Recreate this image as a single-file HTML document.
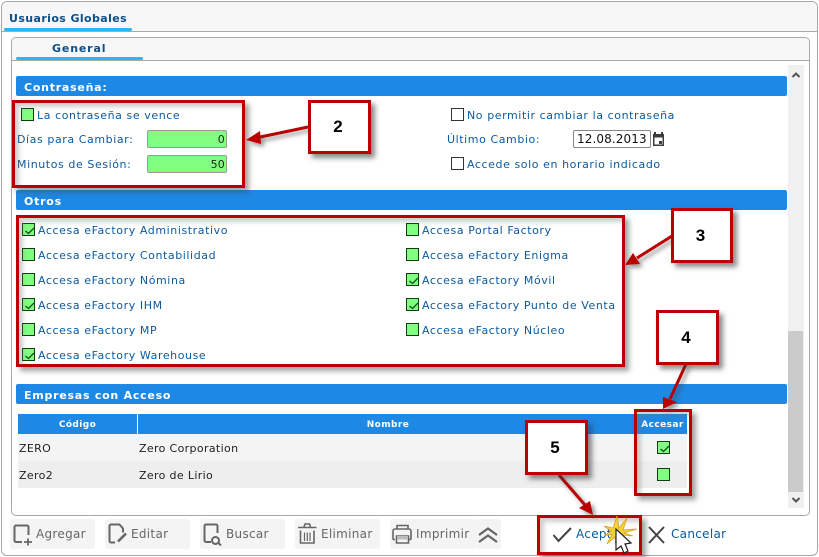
<!DOCTYPE html>
<html><head><meta charset="utf-8"><style>
html,body{margin:0;padding:0;background:#fff}
#r{position:relative;width:819px;height:557px;overflow:hidden;background:#fff;font-family:"DejaVu Sans","Liberation Sans",sans-serif;font-size:11px;letter-spacing:.58px;color:#0b5a9e}
#r div,#r span{position:absolute;box-sizing:border-box}
.t{white-space:nowrap;line-height:14px;margin-top:1px}
.bar{left:16px;width:771px;height:20px;background:#1e88e5;border-radius:2px;color:#fff;font-weight:bold}
.bar b{position:absolute;left:8px;top:5px;line-height:14px;white-space:nowrap;letter-spacing:.75px}
.g{width:13px;height:13px;background:#80ff80;border:1px solid #0f3d0f}
.w{width:13px;height:13px;background:#fff;border:1px solid #333}
.g svg{position:absolute;left:1px;top:1px}
.inp{width:80px;height:18px;background:#80ff80;border:1px solid #999;border-radius:2px;color:#222;font-size:11px;text-align:right;padding-right:1px;line-height:17px;letter-spacing:.2px}
.rb{border:3px solid #bb0000;box-shadow:4px 4px 5px rgba(70,70,70,.5), inset 4px 4px 4px rgba(120,120,120,.35)}
.nb{background:#fff;border:3px solid #bb0000;box-shadow:4px 4px 5px rgba(60,60,60,.6);font:bold 17px "Liberation Sans",sans-serif;color:#000;text-align:center;letter-spacing:0;padding-right:3px}
.btn{top:519px;height:30px;width:85px;background:#f4f4f4;border-radius:3px}
.bt{top:527px;color:#666;font-size:12px;letter-spacing:.3px;white-space:nowrap;line-height:15px}
.h{background:#1e88e5;color:#fff;font-weight:bold;font-size:9px;text-align:center;height:20px;top:414px;line-height:22px;letter-spacing:.4px}
.c{color:#222;letter-spacing:.35px;white-space:nowrap;line-height:14px;margin-top:1px}
</style></head><body><div id="r">

<!-- outer panel -->
<div style="left:1px;top:1px;width:817px;height:555px;border:1px solid #a8a8a8;border-radius:6px;background:#fff"></div>
<div style="left:2px;top:2px;width:815px;height:30px;background:#f7f7f7;border-bottom:1px solid #a8a8a8;border-radius:5px 5px 0 0"></div>
<div style="left:4px;top:28px;width:128px;height:3px;background:#29b6f6;border-radius:2px"></div>
<span class="t" style="left:9px;top:11px;font-weight:bold;font-size:11px;letter-spacing:.4px;color:#0b4f8a">Usuarios Globales</span>

<!-- inner panel -->
<div style="left:11px;top:37px;width:799px;height:479px;border:1px solid #a8a8a8;border-radius:5px;background:#fff"></div>
<div style="left:12px;top:38px;width:797px;height:23px;background:#f7f7f7;border-bottom:1px solid #a8a8a8;border-radius:4px 4px 0 0"></div>
<div style="left:16px;top:57px;width:127px;height:3px;background:#29b6f6;border-radius:2px"></div>
<span class="t" style="left:52px;top:41px;font-weight:bold;letter-spacing:.85px;color:#0b4f8a">General</span>

<!-- scrollbar -->
<div style="left:788px;top:65px;width:16px;height:443px;background:#f0f0f0"></div>
<div style="left:788px;top:331px;width:15px;height:161px;background:#cbcbcb"></div>
<svg style="position:absolute;left:788px;top:65px" width="16" height="443"><path d="M4.500 12 L8 8.500 L11.500 12" fill="none" stroke="#555" stroke-width="2"/><path d="M4.500 433 L8 436.500 L11.500 433" fill="none" stroke="#555" stroke-width="2"/></svg>

<!-- Contraseña -->
<div class="bar" style="top:76px"><b>Contraseña:</b></div>
<div class="g" style="left:21px;top:108px"></div>
<span class="t" style="left:37px;top:108px">La contraseña se vence</span>
<span class="t" style="left:17px;top:132px">Días para Cambiar:</span>
<div class="inp" style="left:147px;top:130px">0</div>
<span class="t" style="left:17px;top:157px">Minutos de Sesión:</span>
<div class="inp" style="left:147px;top:155px">50</div>

<div class="w" style="left:451px;top:108px"></div>
<span class="t" style="left:467px;top:108px">No permitir cambiar la contraseña</span>
<span class="t" style="left:447px;top:132px">Último Cambio:</span>
<div style="left:573px;top:130px;width:78px;height:18px;border:1px solid #888;border-radius:2px;color:#111;font-size:12px;line-height:16px;padding-left:3px;letter-spacing:.1px;white-space:nowrap">12.08.2013</div>
<svg style="position:absolute;left:652px;top:131px" width="14" height="16"><path d="M1 3h11v12H1z" fill="#3d3d3d"/><path d="M3 1v3M10 1v3" stroke="#3d3d3d" stroke-width="2"/><path d="M2.500 6.500h8v7h-8z" fill="#fff"/><path d="M7 10h3v3H7z" fill="#3d3d3d"/></svg>
<div class="w" style="left:451px;top:157px"></div>
<span class="t" style="left:467px;top:157px">Accede solo en horario indicado</span>

<!-- Otros -->
<div class="bar" style="top:190px"><b>Otros</b></div>

<div class="g" style="left:22px;top:223px"><svg width="11" height="11"><path d="M1.500 6 L4.500 8.500 L10 3" fill="none" stroke="#0f4f1a" stroke-width="1.300"/></svg></div>
<span class="t" style="left:38px;top:223px">Accesa eFactory Administrativo</span>
<div class="g" style="left:22px;top:248px"></div>
<span class="t" style="left:38px;top:248px">Accesa eFactory Contabilidad</span>
<div class="g" style="left:22px;top:273px"></div>
<span class="t" style="left:38px;top:273px">Accesa eFactory Nómina</span>
<div class="g" style="left:22px;top:298px"><svg width="11" height="11"><path d="M1.500 6 L4.500 8.500 L10 3" fill="none" stroke="#0f4f1a" stroke-width="1.300"/></svg></div>
<span class="t" style="left:38px;top:298px">Accesa eFactory IHM</span>
<div class="g" style="left:22px;top:323px"></div>
<span class="t" style="left:38px;top:323px">Accesa eFactory MP</span>
<div class="g" style="left:22px;top:348px"><svg width="11" height="11"><path d="M1.500 6 L4.500 8.500 L10 3" fill="none" stroke="#0f4f1a" stroke-width="1.300"/></svg></div>
<span class="t" style="left:38px;top:348px">Accesa eFactory Warehouse</span>

<div class="g" style="left:406px;top:223px"></div>
<span class="t" style="left:422px;top:223px">Accesa Portal Factory</span>
<div class="g" style="left:406px;top:248px"></div>
<span class="t" style="left:422px;top:248px">Accesa eFactory Enigma</span>
<div class="g" style="left:406px;top:273px"><svg width="11" height="11"><path d="M1.500 6 L4.500 8.500 L10 3" fill="none" stroke="#0f4f1a" stroke-width="1.300"/></svg></div>
<span class="t" style="left:422px;top:273px">Accesa eFactory Móvil</span>
<div class="g" style="left:406px;top:298px"><svg width="11" height="11"><path d="M1.500 6 L4.500 8.500 L10 3" fill="none" stroke="#0f4f1a" stroke-width="1.300"/></svg></div>
<span class="t" style="left:422px;top:298px">Accesa eFactory Punto de Venta</span>
<div class="g" style="left:406px;top:323px"></div>
<span class="t" style="left:422px;top:323px">Accesa eFactory Núcleo</span>

<!-- Empresas -->
<div class="bar" style="top:384px"><b>Empresas con Acceso</b></div>
<div class="h" style="left:18px;width:119px">Código</div>
<div class="h" style="left:138px;width:500px">Nombre</div>
<div class="h" style="left:638px;width:49px">Accesar</div>
<div style="left:18px;top:434px;width:669px;height:27px;background:#f4f4f4"></div>
<div style="left:18px;top:461px;width:669px;height:27px;background:#eeeeee"></div>
<span class="c" style="left:19px;top:441px">ZERO</span>
<span class="c" style="left:139px;top:441px">Zero Corporation</span>
<span class="c" style="left:19px;top:468px">Zero2</span>
<span class="c" style="left:139px;top:468px">Zero de Lirio</span>
<div class="g" style="left:657px;top:441px"><svg width="11" height="11"><path d="M1.500 6 L4.500 8.500 L10 3" fill="none" stroke="#0f4f1a" stroke-width="1.300"/></svg></div>
<div class="g" style="left:657px;top:468px"></div>

<!-- toolbar -->
<div class="btn" style="left:10px"></div>
<div class="btn" style="left:105px"></div>
<div class="btn" style="left:200px"></div>
<div class="btn" style="left:295px"></div>
<div class="btn" style="left:390px"></div>
<div class="btn" style="left:475px;width:26px"></div>
<span class="bt" style="left:36px">Agregar</span>
<span class="bt" style="left:131px">Editar</span>
<span class="bt" style="left:226px">Buscar</span>
<span class="bt" style="left:321px">Eliminar</span>
<span class="bt" style="left:416px">Imprimir</span>
<svg style="position:absolute;left:0;top:521px" width="520" height="34" fill="none" stroke="#666" stroke-width="2">
<path d="M22 21H16a1.500 1.500 0 0 1-1.500-1.500V6a1.500 1.500 0 0 1 1.500-1.500h11a1.500 1.500 0 0 1 1.500 1.500v8"/><path d="M24 21h8M28 17.500v7" stroke-width="1.800"/>
<path d="M115 21.500h-4a1.500 1.500 0 0 1-1.500-1.500V5a1.500 1.500 0 0 1 1.500-1.500h8.500l3.500 4v4"/><path d="M118 20.500l8-8" stroke-width="2.600"/>
<path d="M211 21h-5a1.500 1.500 0 0 1-1.500-1.500V5a1.500 1.500 0 0 1 1.500-1.500h10a1.500 1.500 0 0 1 1.500 1.500v7"/><circle cx="215.500" cy="19.500" r="3.500"/><path d="M218.500 22l2.500 2.500"/>
<path d="M298 6.500h18.500M304 6l1-3h4.500l1 3" stroke-width="1.600"/><path d="M300.500 9.500v12.500h13.500v-12.500" stroke-width="1.600"/><path d="M304.500 11.500v8.500M307.300 11.500v8.500M310 11.500v8.500" stroke-width="1.200"/>
<path d="M397 8V4.500h11V8M395 18.500h-1a1 1 0 0 1-1-1V10a2 2 0 0 1 2-2h14a2 2 0 0 1 2 2v7.500a1 1 0 0 1-1 1h-1" stroke-width="1.600"/><path d="M396.500 15h12v7h-12z" stroke-width="1.600"/><path d="M397 18.500h11v-3.500h-11z" fill="#bbb" stroke="none"/>
<path d="M479 14l9-6.500 9 6.500M479 21l9-6.500 9 6.500" stroke-width="2.200"/>
</svg>

<!-- accept/cancel -->
<span class="t" style="left:576px;top:526px;font-size:12px;letter-spacing:.3px;line-height:15px">Aceptar</span>
<span class="t" style="left:671px;top:526px;font-size:12px;letter-spacing:.3px;line-height:15px">Cancelar</span>
<svg style="position:absolute;left:540px;top:515px" width="130" height="40" fill="none" stroke="#444" stroke-width="2"><path d="M13.500 20l5 6L31 13"/><path d="M109 12l15 16M124 12l-15 16"/></svg>

<!-- callouts -->
<div class="rb" style="left:12px;top:100px;width:233px;height:88px"></div>
<div class="rb" style="left:16px;top:215px;width:609px;height:152px"></div>
<div class="rb" style="left:634px;top:409px;width:58px;height:87px"></div>
<div class="rb" style="left:537px;top:515px;width:105px;height:40px"></div>

<svg style="position:absolute;left:0;top:0" width="819" height="557">
<defs><filter id="s" x="-30%" y="-30%" width="160%" height="160%"><feDropShadow dx="3" dy="3" stdDeviation="2" flood-color="#444" flood-opacity=".55"/></filter></defs>
<g filter="url(#s)" fill="#bb0000" stroke="#bb0000">
<path d="M308 127L258 137.500" stroke-width="3"/><path d="M246 140L260 131L261 144z" stroke="none"/>
<path d="M672 236L637 258" stroke-width="3"/><path d="M625 265L633 253L640 264z" stroke="none"/>
<path d="M686 364L670 399" stroke-width="3"/><path d="M663 409L663 397L677 402z" stroke="none"/>
<path d="M559 475L585 505" stroke-width="3"/><path d="M593 515L579 508L590 501z" stroke="none"/>
</g>
</svg>

<div class="nb" style="left:308px;top:100px;width:63px;height:54px;line-height:48px">2</div>
<div class="nb" style="left:671px;top:208px;width:62px;height:55px;line-height:49px">3</div>
<div class="nb" style="left:656px;top:310px;width:63px;height:55px;line-height:49px">4</div>
<div class="nb" style="left:525px;top:420px;width:63px;height:55px;line-height:49px">5</div>

<!-- spark + cursor -->
<svg style="position:absolute;left:600px;top:512px" width="40" height="45">
<path d="M17 4l2 12 8-10-4 12 14-1-13 4 9 3-11-1 4 10-7-8-3 11-1-11-8 7 5-10-8 2 7-5-7-5 9 2z" fill="#f5d23c" stroke="#d8a31a" stroke-width=".8"/>
<path d="M16 17v21l5-4 3 7 4-2-3-7 6-1z" fill="#fff" stroke="#222" stroke-width="1.200"/>
</svg>

</div></body></html>
